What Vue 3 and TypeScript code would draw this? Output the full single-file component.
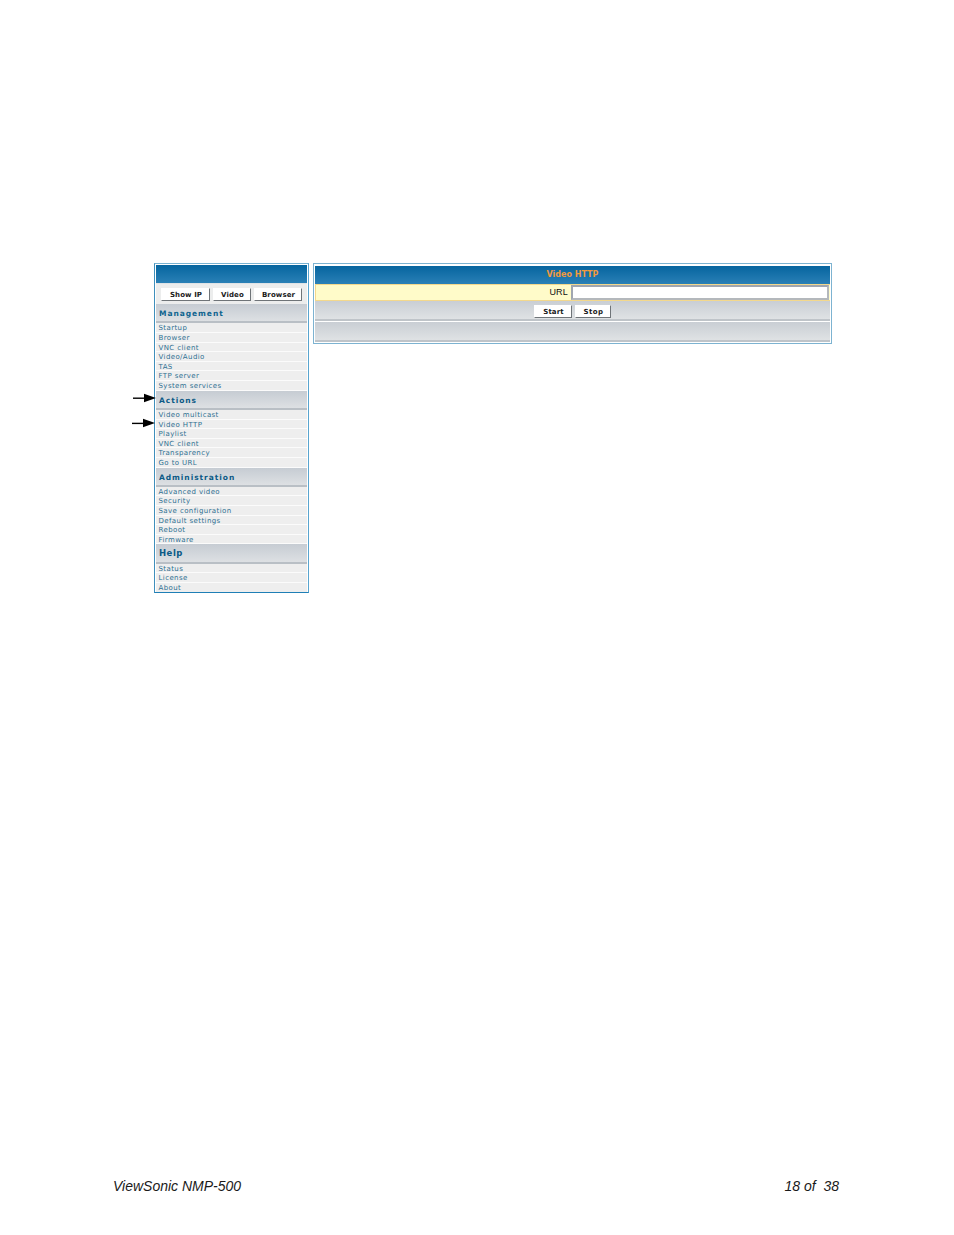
<script setup lang="ts">
interface Section { title: string; items: string[] }
const sections: Section[] = [
  { title: 'Management', items: ['Startup', 'Browser', 'VNC client', 'Video/Audio', 'TAS', 'FTP server', 'System services'] },
  { title: 'Actions', items: ['Video multicast', 'Video HTTP', 'Playlist', 'VNC client', 'Transparency', 'Go to URL'] },
  { title: 'Administration', items: ['Advanced video', 'Security', 'Save configuration', 'Default settings', 'Reboot', 'Firmware'] },
  { title: 'Help', items: ['Status', 'License', 'About'] },
]
const topButtons = ['Show IP', 'Video', 'Browser']
</script>

<template>
  <div class="page">
    <div class="shot">
      <aside class="side">
        <div class="bar"></div>
        <div class="topbtns">
          <button v-for="b in topButtons" :key="b" class="btn">{{ b }}</button>
        </div>
        <section v-for="s in sections" :key="s.title">
          <h3 class="head">{{ s.title }}</h3>
          <div v-for="it in s.items" :key="it" class="item">{{ it }}</div>
        </section>
      </aside>
      <main class="main">
        <div class="bar title">Video HTTP</div>
        <div class="urlrow">
          <label class="urllabel">URL</label>
          <div class="urlinput"></div>
        </div>
        <div class="actions">
          <button class="btn act">Start</button>
          <button class="btn act">Stop</button>
        </div>
        <div class="empty"></div>
      </main>
      <svg class="arrow a1" width="24" height="10" viewBox="0 0 24 10"><path d="M0 5.2H12" stroke="#000" stroke-width="1.4"/><path d="M11 .8L23 5 11 9.2z" fill="#000"/></svg>
      <svg class="arrow a2" width="24" height="10" viewBox="0 0 24 10"><path d="M0 5.4H12" stroke="#000" stroke-width="1.4"/><path d="M11 .8L23 5 11 9.2z" fill="#000"/></svg>
    </div>
    <footer class="foot">
      <span>ViewSonic NMP-500</span>
      <span>18 of&nbsp; 38</span>
    </footer>
  </div>
</template>

<style>
html, body { margin: 0; background: #fff; }
</style>

<style scoped>
.page {
  width: 954px;
  height: 1235px;
  box-sizing: border-box;
  padding: 263px 115px 0 113px;
  display: flex;
  flex-direction: column;
  font-family: "DejaVu Sans", sans-serif;
  overflow: hidden;
}
.shot {
  position: relative;
  display: flex;
  align-items: flex-start;
  gap: 4px;
  margin-left: 41px;
  margin-right: -8px;
}
.side {
  width: 155px;
  height: 330px;
  box-sizing: border-box;
  flex: none;
  border: 1px solid #79b3d2;
  border-bottom-color: #1f7fb6;
  border-left-color: #3f8fbc;
  border-right-color: #5aa5cf;
  padding: 1px;
  background: #fff;
  overflow: hidden;
}
.bar {
  height: 18px;
  background: linear-gradient(#06659f, #2a80b6);
}
.topbtns {
  height: 21px;
  box-sizing: border-box;
  padding: 4px 5px 0 5px;
  display: flex;
  gap: 3px;
  background: #eceded;
  border-top: 1px solid #dfe3e6;
}
.btn {
  margin: 0;
  padding: 1px 0 0 1px;
  width: 48px;
  height: 13px;
  box-sizing: border-box;
  background: #fff;
  border: 1px solid #fff;
  border-right: 1px solid #6f7478;
  border-bottom: 1px solid #6f7478;
  font: 700 7px/10px "DejaVu Sans", sans-serif;
  letter-spacing: 0.1px;
  color: #1a1a1a;
  text-align: center;
}
.topbtns .btn:nth-child(1) { width: 49px; }
.topbtns .btn:nth-child(2) { width: 38px; }
.head {
  margin: 0;
  height: 19.4px;
  box-sizing: border-box;
  padding-left: 3px;
  font: 700 7.5px/19.4px "DejaVu Sans", sans-serif;
  letter-spacing: 0.95px;
  color: #0e648f;
  background: linear-gradient(#c6ccd3, #dde0e3);
  border-bottom: 2px solid #b9bfc5;
}
section:nth-of-type(2) .head, section:nth-of-type(3) .head, section:nth-of-type(4) .head { color: #0b5a86; }
section:nth-of-type(4) .head { font-size: 8.5px; letter-spacing: 0.5px; }
.item {
  height: 9.6px;
  box-sizing: border-box;
  padding-left: 2.5px;
  font: 400 7px/11px "DejaVu Sans", sans-serif;
  letter-spacing: 0.4px;
  color: #2f7092;
  background: #eeeeee;
  border-bottom: 1px solid #fbfbfb;
  white-space: nowrap;
}
.main {
  width: 519px;
  height: 81px;
  box-sizing: border-box;
  flex: none;
  border: 1px solid #7db3d1;
  padding: 2px 1px 1px;
  background: #fff;
}
.title {
  text-align: center;
  font: 700 8px/18px "DejaVu Sans", sans-serif;
  letter-spacing: 0;
  color: #f29a3e;
}
.urlrow {
  height: 17px;
  box-sizing: border-box;
  display: flex;
  align-items: center;
  justify-content: flex-end;
  gap: 3px;
  padding-right: 1px;
  background: #fffbc9;
  border: 1px solid #f3d88c;
  border-right: none;
}
.urllabel {
  font: 400 9px/1 "Liberation Sans", Arial, sans-serif;
  letter-spacing: 0.2px;
  color: #111;
}
.urlinput {
  width: 258px;
  height: 15px;
  box-sizing: border-box;
  background: #fff;
  border: 2px solid #b4b8bc;
  border-top-color: #a0a6b0;
  border-left-color: #a0a6b0;
}
.actions {
  height: 20px;
  box-sizing: border-box;
  display: flex;
  justify-content: center;
  gap: 3px;
  padding-top: 4px;
  background: linear-gradient(#c9ced4, #dfe2e4);
  border-bottom: 2px solid #bfc4c9;
  margin-bottom: 1px;
}
.act { width: 38px; height: 13px; }
.act + .act { width: 36px; letter-spacing: 0.5px; }
.empty {
  height: 20px;
  background: linear-gradient(#c9ced4, #dfe2e4);
  border-bottom: 2px solid #bfc4c9;
  box-sizing: border-box;
}
.arrow { position: absolute; left: -21px; }
.a1 { top: 130px; }
.a2 { top: 155px; left: -22px; }
.foot {
  position: absolute;
  left: 113px;
  right: 115px;
  top: 1178px;
  display: flex;
  justify-content: space-between;
  font: italic 400 14px/17px "Liberation Sans", Arial, sans-serif;
  color: #1a1a1a;
}
</style>
